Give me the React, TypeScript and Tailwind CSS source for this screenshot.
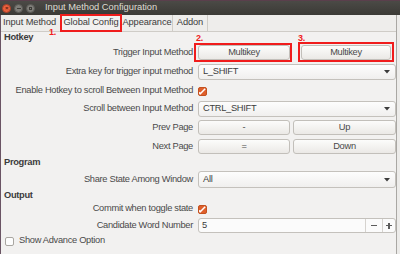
import type { ReactNode } from 'react';

const font = "font-['Liberation_Sans',Arial,sans-serif]";

function Row({ label, h, children }: { label: string; h: string; children: ReactNode }) {
  return (
    <div className={`flex items-center ${h}`}>
      <div className="w-[192px] text-right text-[#4a4a4a] whitespace-nowrap">{label}</div>
      <div className="ml-[5px] flex items-center">{children}</div>
    </div>
  );
}

function Header({ text, h }: { text: string; h: string }) {
  return (
    <div className={`flex items-center pl-[3px] font-bold text-[#3c3c3c] ${h}`}>{text}</div>
  );
}

function Btn({ w, children }: { w: string; children: ReactNode }) {
  return (
    <div
      className={`${w} h-[15px] flex items-center justify-center rounded-[3px] border border-[#c2bfba] bg-linear-to-b from-[#fcfcfb] to-[#ebe9e6] text-[#4a4a4a]`}
    >
      {children}
    </div>
  );
}

function Combo({ value, h }: { value: string; h: string }) {
  return (
    <div
      className={`w-[198px] ${h} flex items-center justify-between pl-[4px] pr-[5px] rounded-[3px] border border-[#c4c1bc] bg-linear-to-b from-[#fdfdfd] to-[#f0efee] text-[#3c3c3c]`}
    >
      <span>{value}</span>
      <svg width="6" height="4" viewBox="0 0 6 4">
        <path d="M0 0H6L3 3.5Z" fill="#3c3c3c" />
      </svg>
    </div>
  );
}

function Check({ on }: { on: boolean }) {
  if (!on)
    return <div className="w-[9px] h-[9px] rounded-[2px] border border-[#a9a6a1] bg-[#fdfdfd]" />;
  return (
    <div className="w-[9px] h-[9px] rounded-[2px] bg-[#df5f2b] border border-[#c3511f] flex items-center justify-center">
      <svg width="7" height="7" viewBox="0 0 7 7">
        <path d="M0.8 6.2L6.2 0.8" stroke="#ffffff" strokeWidth="1.5" fill="none" />
        <path d="M0.8 6.2L0.8 4" stroke="#ffffff" strokeWidth="1.3" fill="none" />
      </svg>
    </div>
  );
}

export default function App() {
  return (
    <div className={`w-[400px] h-[254px] overflow-hidden bg-[#ecebe9] ${font} text-[9.3px] tracking-[-0.3px] relative`}>
      {/* Title bar */}
      <div className="h-[15px] flex items-center bg-linear-to-b from-[#4b4a46] to-[#3b3a36] border-t border-[#5a3f4c]">
        <div className="flex items-center gap-[3px] pl-[2px]">
          <div className="w-[9px] h-[9px] rounded-full bg-[#e9603d] border border-[#a8412a] flex items-center justify-center text-[6px] leading-none text-[#5a2012] font-bold">×</div>
          <div className="w-[9px] h-[9px] rounded-full bg-[#7e7d78] border border-[#5b5a56] flex items-center justify-center">
            <div className="w-[4px] h-[1px] bg-[#3d3c38]" />
          </div>
          <div className="w-[9px] h-[9px] rounded-full bg-[#7e7d78] border border-[#5b5a56] flex items-center justify-center">
            <div className="w-[3px] h-[3px] border border-[#3d3c38]" />
          </div>
        </div>
        <div className="ml-[10px] text-[9.3px] tracking-normal text-[#dfdbd2] font-medium">Input Method Configuration</div>
      </div>

      <div className="h-[239px] w-[397px] bg-[#f2f1f0] border-l border-[#6a5464] border-r border-r-[#a9a7a3] flex flex-col">
        {/* Tabs */}
        <div className="h-[17px] flex items-stretch border-b border-[#cfccc7] bg-[#eeedeb] text-[#3c3c3c] tracking-[-0.1px]">
          <div className="w-[60px] flex items-center pl-[2px] border-r border-[#cfccc7]">Input Method</div>
          <div className="w-[61px] flex items-center justify-center bg-[#f2f1f0] border-r border-[#cfccc7] relative">
            Global Config
            <div className="absolute -top-[1px] -left-[1px] -right-[1px] -bottom-[1px] border-2 border-[#f01c1c]" />
          </div>
          <div className="w-[51px] flex items-center justify-center border-r border-[#cfccc7]">Appearance</div>
          <div className="w-[35px] flex items-center justify-center border-r border-[#cfccc7]">Addon</div>
        </div>

        <div className="relative">
          <Header text="Hotkey" h="h-[12px]" />
          <span className="absolute left-[48px] -top-[6px] text-[9px] font-bold text-[#f01c1c]">1.</span>
          <span className="absolute left-[195px] top-[0px] text-[9px] font-bold text-[#f01c1c]">2.</span>
          <span className="absolute left-[297px] top-[0px] text-[9px] font-bold text-[#f01c1c]">3.</span>
        </div>

        <Row label="Trigger Input Method" h="h-[17px]">
          <div className="relative">
            <Btn w="w-[92px]">Multikey</Btn>
            <div className="absolute -left-[4px] -right-[2px] -top-[2px] -bottom-[2px] border-2 border-[#f01c1c]" />
          </div>
          <div className="relative ml-[11px]">
            <Btn w="w-[90px]">Multikey</Btn>
            <div className="absolute -left-[3px] -right-[3px] -top-[3px] -bottom-[2px] border-2 border-[#f01c1c]" />
          </div>
        </Row>
        <Row label="Extra key for trigger input method" h="h-[21px]">
          <Combo value="L_SHIFT" h="h-[16px]" />
        </Row>
        <Row label="Enable Hotkey to scroll Between Input Method" h="h-[18px]">
          <Check on />
        </Row>
        <Row label="Scroll between Input Method" h="h-[18px]">
          <Combo value="CTRL_SHIFT" h="h-[16px]" />
        </Row>
        <Row label="Prev Page" h="h-[19px]">
          <Btn w="w-[92px]">-</Btn>
          <div className="ml-[3px]">
            <Btn w="w-[103px]">Up</Btn>
          </div>
        </Row>
        <Row label="Next Page" h="h-[19px]">
          <Btn w="w-[92px]">=</Btn>
          <div className="ml-[3px]">
            <Btn w="w-[103px]">Down</Btn>
          </div>
        </Row>

        <Header text="Program" h="h-[14px]" />
        <Row label="Share State Among Window" h="h-[19px]">
          <Combo value="All" h="h-[17px]" />
        </Row>

        <Header text="Output" h="h-[13px]" />
        <Row label="Commit when toggle state" h="h-[14px]">
          <Check on />
        </Row>
        <Row label="Candidate Word Number" h="h-[19px]">
          <div className="w-[198px] h-[15px] flex items-stretch rounded-[3px] border border-[#c4c1bc] bg-[#fbfbfb] text-[#3c3c3c]">
            <div className="flex-1 flex items-center pl-[3px]">5</div>
            <div className="w-[17px] flex items-center justify-center border-l border-[#d6d3cf]">
              <div className="w-[6px] h-[1.5px] bg-[#5c5c5c]" />
            </div>
            <div className="w-[13px] flex items-center justify-center border-l border-[#d6d3cf] relative">
              <div className="w-[6px] h-[1.5px] bg-[#5c5c5c]" />
              <div className="absolute w-[1.5px] h-[6px] bg-[#5c5c5c]" />
            </div>
          </div>
        </Row>
        <div className="h-[12px] flex items-center pl-[4px]">
          <Check on={false} />
          <span className="ml-[5px] text-[#4a4a4a]">Show Advance Option</span>
        </div>
      </div>
    </div>
  );
}
